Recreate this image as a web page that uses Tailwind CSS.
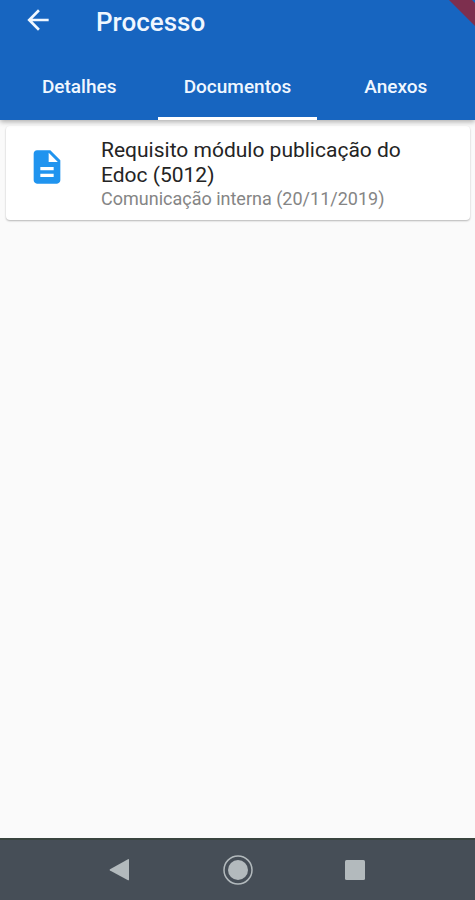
<!DOCTYPE html>
<html lang="pt-BR">
<head>
<meta charset="utf-8">
<meta name="viewport" content="width=device-width, initial-scale=1">
<title>Processo</title>
<script src="https://cdn.jsdelivr.net/npm/@tailwindcss/browser@4"></script>
</head>
<body class="flex min-h-screen flex-col bg-[#fafafa] font-['Roboto',sans-serif]">
  <header class="relative bg-[#1765c0] text-[#f0f7ff] shadow-[0_2px_5px_rgba(0,0,0,0.3)]">
    <div class="flex h-[54px] items-start">
      <button type="button" aria-label="Voltar" class="ml-[22px] mt-1 size-8">
        <svg class="size-8" viewBox="0 0 24 24" fill="currentColor" aria-hidden="true"><path d="M20 11H7.8l5.6-5.6L12 4l-8 8 8 8 1.4-1.4L7.8 13H20z"/></svg>
      </button>
      <h1 class="ml-[42px] mt-1 text-[26px] leading-9 font-medium">Processo</h1>
    </div>
    <nav class="grid h-[66px] grid-cols-3 text-center text-[19px] leading-6 font-medium">
      <a href="#detalhes" class="border-b-3 border-transparent pt-[21px]">Detalhes</a>
      <a href="#documentos" aria-current="page" class="border-b-3 border-white pt-[21px]">Documentos</a>
      <a href="#anexos" class="border-b-3 border-transparent pt-[21px]">Anexos</a>
    </nav>
    <svg class="absolute top-0 right-0 h-[30px] w-[30px]" viewBox="0 0 30 30" aria-hidden="true"><path d="M4 0H27L30 3V26z" fill="#7d2f4e"/></svg>
  </header>
  <main id="documentos" class="flex-1 pt-[6px] pr-[5px] pl-[6px]">
    <article class="flex rounded bg-white pt-3 pr-5 pb-[10px] pl-[21px] shadow-[0_1px_2px_rgba(0,0,0,0.28)]">
      <svg class="mt-[9px] mr-[34px] size-10 shrink-0" viewBox="0 0 24 24" fill="#2094ef" aria-hidden="true"><path d="M14 2H6c-1.100 0-2 .9-2 2v16c0 1.100.9 2 2 2h12c1.100 0 2-.9 2-2V8zm2 16H8v-2h8zm0-4H8v-2h8zm-3-5V3.500L18.500 9z"/></svg>
      <div>
        <h2 class="text-[21px] leading-[25px] text-[#242424]">Requisito módulo publicação do Edoc (5012)</h2>
        <p class="text-[18px] leading-[22px] text-[#858585]">Comunicação interna (20/11/2019)</p>
      </div>
    </article>
  </main>
  <footer class="grid h-[62px] grid-cols-[1fr_118px_118px_118px_1fr] items-center border-t-2 border-[#39443f] bg-[#464e57] text-[#b3babd]">
    <button type="button" aria-label="Voltar" class="col-start-2 flex justify-center">
      <svg class="size-8" viewBox="0 0 32 32" fill="currentColor" aria-hidden="true"><path d="M6 15.200 24 5.200q1-.4 1 .8v19.500q0 1.200-1 .7L6 16.500q-1-.6 0-1.300z"/></svg>
    </button>
    <button type="button" aria-label="Início" class="flex justify-center">
      <svg class="size-8" viewBox="0 0 32 32" aria-hidden="true"><circle cx="16" cy="16" r="14" fill="none" stroke="currentColor" stroke-width="1.500"/><circle cx="16" cy="16" r="10" fill="currentColor"/></svg>
    </button>
    <button type="button" aria-label="Recentes" class="flex justify-center">
      <svg class="size-8" viewBox="0 0 32 32" aria-hidden="true"><rect x="5" y="6" width="20" height="20" rx="1.500" fill="currentColor"/></svg>
    </button>
  </footer>
</body>
</html>
